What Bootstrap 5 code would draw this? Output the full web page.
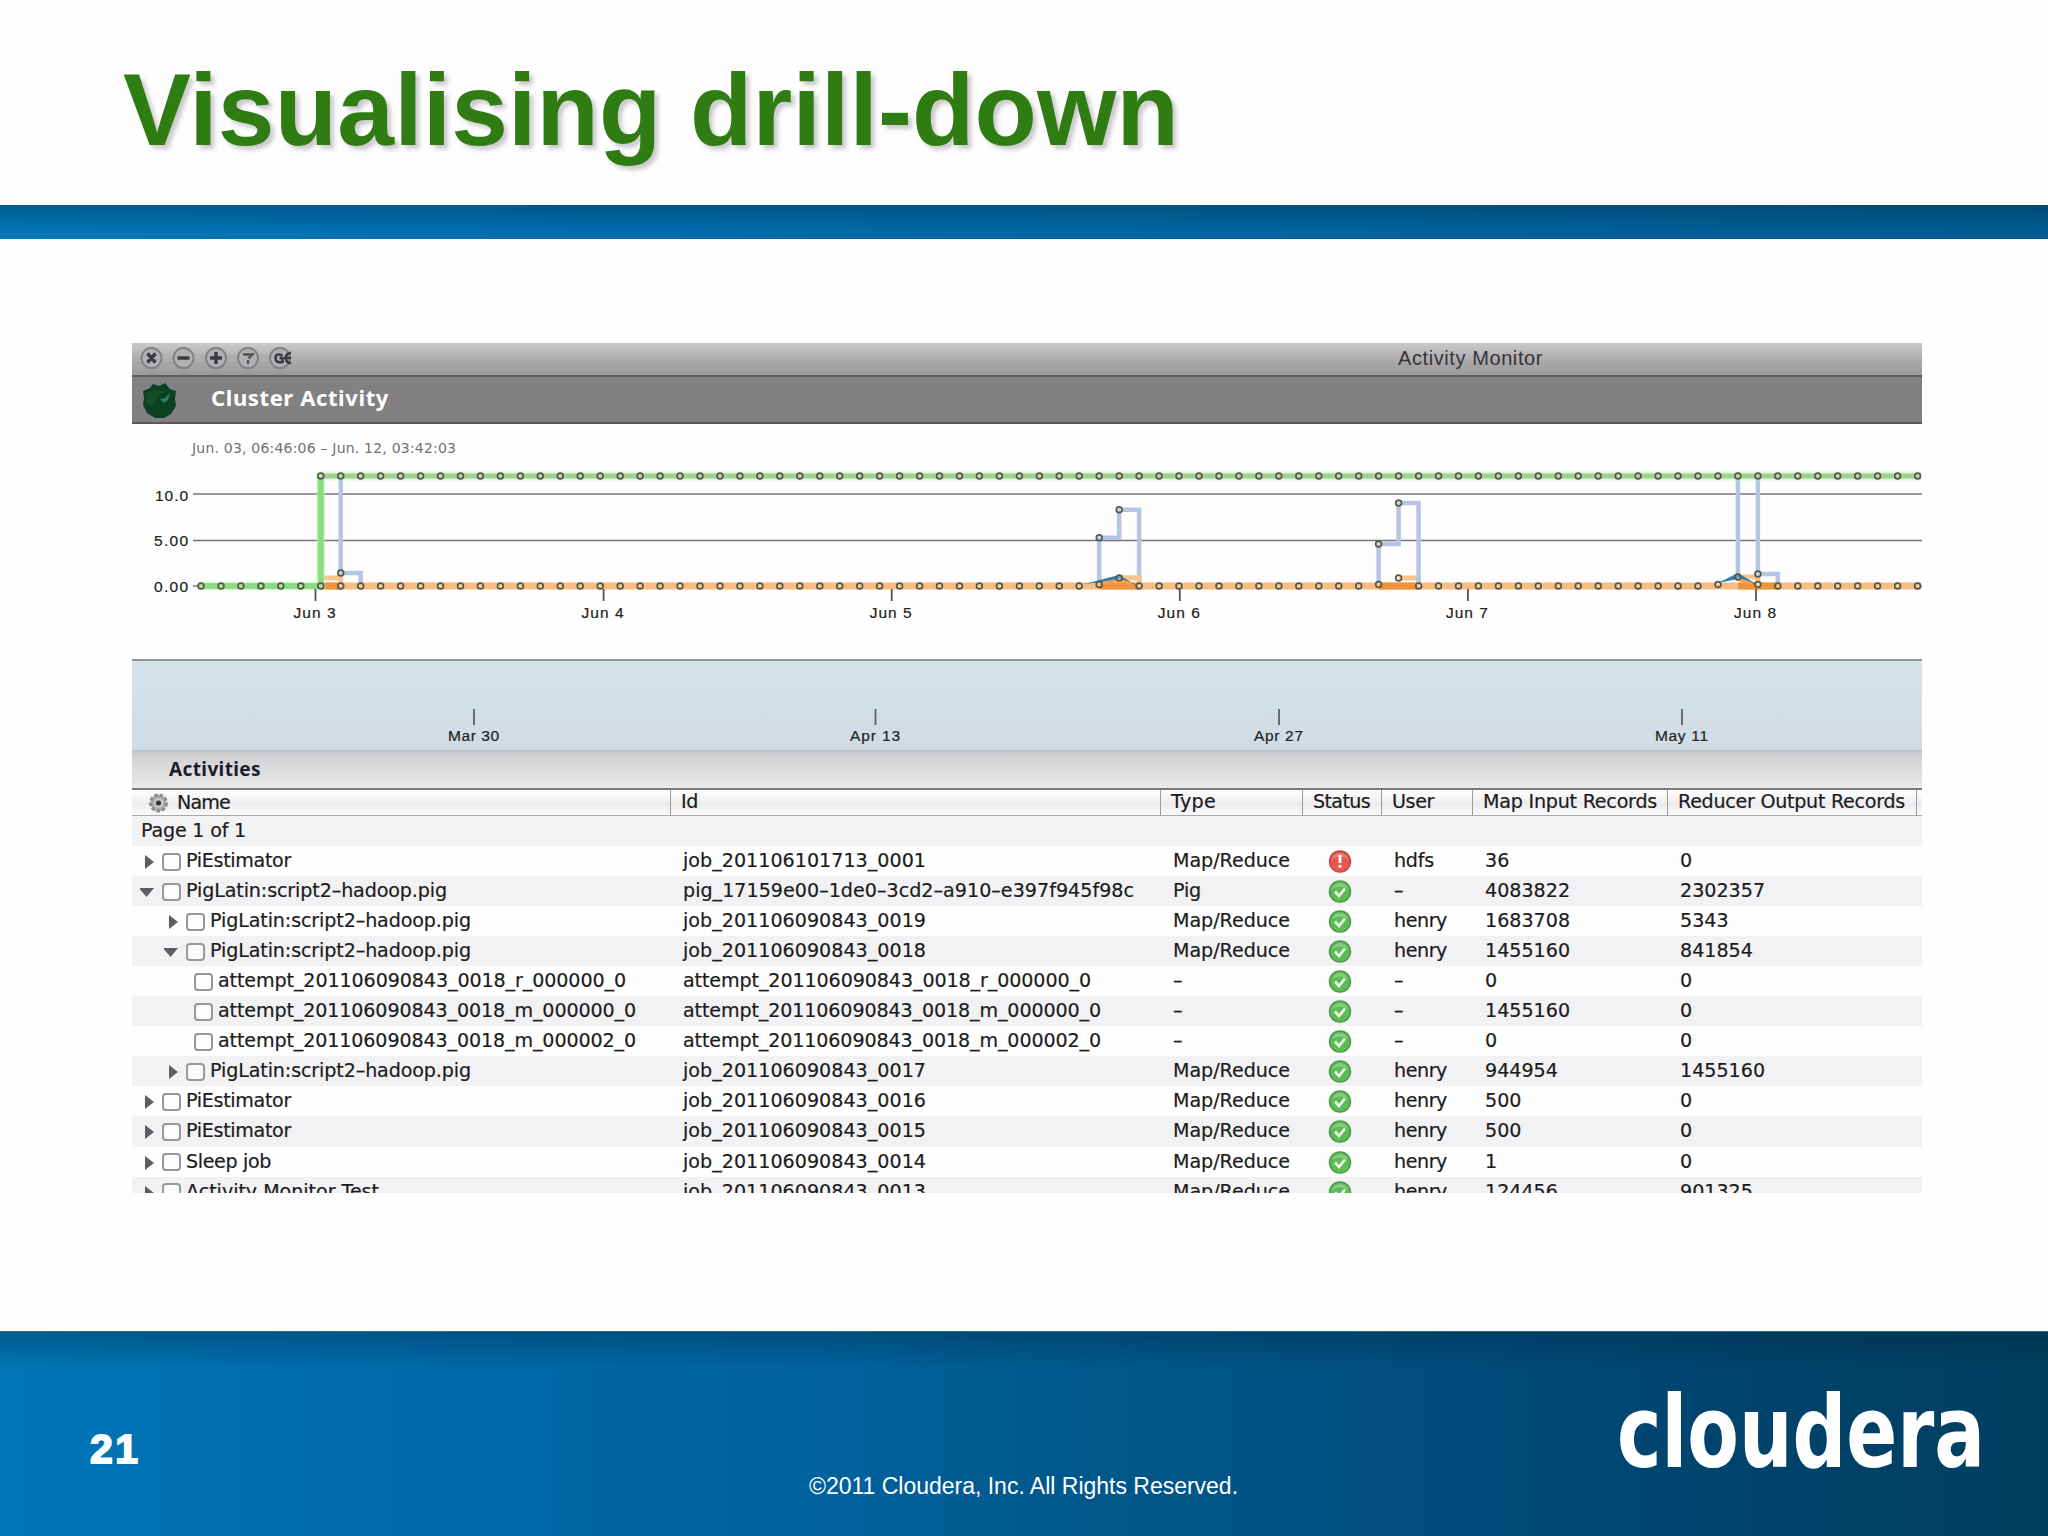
<!DOCTYPE html>
<html lang="en">
<head>
<meta charset="utf-8">
<title>Visualising drill-down</title>
<link href="https://cdn.jsdelivr.net/npm/bootstrap@5.3.0/dist/css/bootstrap.min.css" rel="stylesheet">
<style>
body{width:2048px;height:1536px;overflow:hidden;background:#fefefe;font-family:"Liberation Sans",Arial,sans-serif;color:#1c1c1c}
.slide-head{height:205px;padding:51px 0 0 123px}
.slide-title{font-size:102px;line-height:118px;font-weight:700;color:#2f7d12;text-shadow:4px 4px 4px rgba(90,80,100,.3);white-space:nowrap}
.band{height:34px;background:linear-gradient(180deg,rgba(0,40,60,.32),rgba(0,40,60,0) 26px),linear-gradient(90deg,#0076b7 0,#006fb0 20%,#0068a5 50%,#005f98 80%,#005b92 100%)}
.slide-foot{height:205px;border-top:1px solid #2a6f92;background:linear-gradient(180deg,rgba(0,35,55,.32),rgba(0,35,55,0) 36px),linear-gradient(90deg,#0076b7 0,#006cac 15%,#00629f 40%,#005a8e 50%,#004f80 67%,#00436c 85%,#003f5f 100%)}
.slide-main{height:1092px;padding:104px 126px 0 132px}
.monitor{height:850px;overflow:hidden;font-family:"DejaVu Sans",sans-serif}
.winbar{height:34px;background:linear-gradient(#cac8cb,#aaa7aa 60%,#9c999c);border-bottom:2px solid #5f5d60;padding-left:8px}
.winbar svg{width:170px;height:32px}
.wintitle{font:20px/30px "Liberation Sans",sans-serif;color:#363438;margin-left:1088px}
.toolbar{height:47px;background:#828082;border-bottom:2px solid #5b595b;padding-left:10px}
.tooltitle{font:700 22px/40px "Noto Sans",sans-serif;color:#fff;margin-left:34px;margin-top:-5px}
.chart{display:block;width:1790px;height:235px}
.strip{display:block;width:1790px;height:91px;background:linear-gradient(#d4e3ea,#d1dbe4);border-top:2px solid #8d9599}
.actbar{height:40px;background:linear-gradient(#b9c1c5 0,#cfced1 12%,#dcdbdd 50%,#ebebec);border-bottom:2px solid #7c7c7e;padding-left:37px;font:700 19px/38px "Noto Sans",sans-serif;color:#1d1d28}
.grid-head,.grid-row{display:grid;grid-template-columns:539px 490px 142px 79px 91px 195px 249px 5px;font-size:19.1px;white-space:nowrap;-webkit-text-stroke:.2px #1c1c1c}
.grid-head{height:26px;background:linear-gradient(#fff,#ededf0 55%,#fafafa);border-bottom:1.5px solid #a9a9ab;line-height:24px}
.grid-head>div{border-right:1.5px solid #9c9c9f;padding-left:10px}
.grid-head>div:first-child{padding-left:16px}
.grid-head>div:last-child{border:0}
.grid-row{height:30.05px;line-height:30px}
.grid-row>div{padding-left:12px}
.grid-row>div:nth-child(2){padding-left:12px}
.grid-row>div:first-child{padding-left:8px}
.grid-row:nth-child(odd){background:#f2f1f3}
.lv1{margin-left:24px}.lv2{margin-left:32px}
.tri{width:16px;height:30px;flex:none}
.tick{width:19px;height:18px;border:2px solid #98979b;border-radius:4px;background:#fcfcfd;margin:1px 5px 0 6px;flex:none}
.state{display:block;width:24px;height:28px;margin-left:13px}
.pageno{font-size:41px;line-height:46px;font-weight:700;letter-spacing:2.5px;-webkit-text-stroke:1.8px #fff;margin:94px 0 0 90px;width:60px}
.copy{font-size:23px;line-height:26px;margin:141px 0 0 659px;white-space:nowrap;width:440px}
.logo{width:400px;height:110px;margin:41px 0 0 351px}
</style>
<script src="https://cdn.jsdelivr.net/npm/bootstrap@5.3.0/dist/js/bootstrap.bundle.min.js"></script>
</head>
<body>
<header class="slide-head"><h1 class="slide-title m-0 d-inline-block"><span data-w="1056">Visualising drill-down</span></h1></header>
<div class="band"></div>
<main class="slide-main">
<section class="monitor">
  <div class="winbar d-flex align-items-start">
    <svg viewBox="0 0 170 32" fill="none" stroke="#3c3a3e" stroke-width="3.4">
      <g fill="#b3b0b3" stroke="#817f84" stroke-width="1.8"><circle cx="11.500" cy="15" r="10"/><circle cx="43.500" cy="15" r="10"/><circle cx="76" cy="15" r="10"/><circle cx="108" cy="15" r="10"/><circle cx="140" cy="15" r="10"/></g>
      <path d="M7.500 10.500l8 9M15.500 10.500l-8 9M37.500 15h12M70 15h12M76 9v12"/>
      <path d="M103 11.500h9.500l-4 4M108 17v4" stroke-width="2.300" stroke="#504e52"/>
      <path d="M142.500 12.500q-7-3-7 2.500t7 4v-4h-3M151 10q-5 0-5 5t5 5M144 15h7" stroke-width="2.600"/>
    </svg>
    <div class="wintitle"><span data-w="145">Activity Monitor</span></div>
  </div>
  <div class="toolbar d-flex align-items-center">
    <svg width="35" height="36" viewBox="0 0 35 36"><path d="M1 9L8 6l3-4 6 2 6-3 5 6 6 2-1 8 1 7-5 8-7 4h-9l-8-5-4-8 1-7z" fill="#0b4022"/><path d="M3 12l9-4 12 1-8 5-5 10-7-2z" fill="#124c29"/><path d="M18 17l5-1 5-5-2 7-4 3z" fill="#2b8558"/></svg>
    <div class="tooltitle"><span data-w="178">Cluster Activity</span></div>
  </div>
  <svg class="chart" id="chart" viewBox="132 424 1790 235"></svg>
  <svg class="strip" id="strip" viewBox="132 660 1790 89"></svg>
  <div class="actbar"><span data-w="92">Activities</span></div>
  <div class="grid-head">
    <div class="d-flex align-items-center"><svg width="21" height="20" viewBox="0 0 21 20"><circle cx="10.500" cy="10" r="8" fill="#aaa8aa" stroke="#8c8a8c" stroke-width="3" stroke-dasharray="3.500 2"/><circle cx="10.500" cy="10" r="5" fill="#c5c3c5"/><circle cx="10.500" cy="10" r="2.500" fill="#333"/></svg><span class="ms-2" data-w="53">Name</span></div>
    <div><span data-w="17">Id</span></div><div><span data-w="45">Type</span></div><div><span data-w="57">Status</span></div><div><span data-w="42">User</span></div><div><span data-w="174">Map Input Records</span></div><div><span data-w="227">Reducer Output Records</span></div><div></div>
  </div>
  <div id="rows"><div class="grid-row"><div style="padding-left:9px"><span data-w="105">Page 1 of 1</span></div></div></div>
</section>
</main>
<footer class="slide-foot d-flex align-items-start text-white">
  <div class="pageno">21</div>
  <div class="copy"><span data-w="429">©2011 Cloudera, Inc. All Rights Reserved.</span></div>
  <svg class="logo" viewBox="1600 1373 400 110"><text x="1617" y="1467" font-family="DejaVu Sans Condensed, DejaVu Sans, sans-serif" font-size="99" font-stretch="condensed" font-weight="700" fill="#fff" textLength="368" lengthAdjust="spacingAndGlyphs">cloudera</text></svg>
</footer>
<script>
// Chart: evenly spaced samples along x
const X = i => 201 + 19.96 * i, r = n => n.toFixed(1);
const path = (d, c, w, extra = '') => `<path d="${d}" fill="none" stroke="${c}" stroke-width="${w}" ${extra}/>`;
const dot = (x, y) => `<circle cx="${r(x)}" cy="${y}" r="2.9" fill="#fff" fill-opacity=".25" stroke="#5a5846" stroke-width="1.7"/>`;
let s = path('M193 494H1922M193 540.500H1922M193 586H1922', '#77757a', 1.700);
s += path(`M${X(6)} 586H1921`, '#f8bd83', 7);
s += path(`M${X(6)} 586H${X(7)}M${X(45)} 586H${X(47)}M${X(59)} 586H${X(61)}M${X(77)} 586H${X(79)}`, '#ef923c', 7);
s += path(`M${X(6)} 578H${X(7)}V586M${X(46)} 578H${X(47)}V586M${X(60)} 578H${X(61)}V586M${X(77)} 577H${X(78)}V586`, '#f9c48d', 5);
for (const [a, b, c, y] of [[7, 7, 8, 573], [78, 78, 79, 574]]) s += path(`M${X(a)} 476V${y}H${X(c)}V584`, '#b2c8e2', 4.500);
s += path(`M${X(77)} 476V577`, '#b2c8e2', 4.500);
s += path(`M${X(45)} 584V537.700H${X(46)}V509.700H${X(47)}V584M${X(59)} 584V544H${X(60)}V503H${X(61)}V584`, '#b6c5e4', 4.500);
s += path(`M${X(46)} 578H${X(47)}V586`, '#f9c48d', 5);
s += `<path d="M1084 584L${X(46)} 575L1136 585L${X(46)} 580zM${X(76)} 583L${X(77)} 573L${X(78)} 585L${X(77)} 579z" fill="#287eae"/>`;
s += path(`M1104 583L${X(46)} 580L1132 584M${X(77)} 579l14 5`, '#f3a04c', 3);
s += path(`M199 586H${X(6)}V476H1921`, '#caf5bb', 9, 'opacity=".6"') + path(`M199 586H${X(6)}V476`, '#8edb86', 6) + path(`M${X(6)} 476H1921`, '#a3cf97', 5);
for (let i = 0; i <= 86; i++) { if (![46, 60, 77].includes(i)) s += dot(X(i), [45, 59, 76, 78].includes(i) ? 584.5 : 586); if (i > 5) s += dot(X(i), 476); }
for (const [i, y] of [[7, 573], [45, 537.7], [46, 509.7], [46, 578], [59, 544], [60, 503], [60, 578], [77, 577], [78, 574]]) s += dot(X(i), y);
const txt = (x, y, t, w, a = 'middle') => `<text x="${x}" y="${y}" font-family="Liberation Sans, sans-serif" font-size="15.500" fill="#222" text-anchor="${a}" stroke="#222" stroke-width=".2" textLength="${w}">${t}</text>`;
s += `<text x="192" y="453" font-family="DejaVu Sans" font-size="14" fill="#727075" textLength="264">Jun. 03, 06:46:06 – Jun. 12, 03:42:03</text>`;
s += txt(155, 501, '10.0', 33, 'start') + txt(154, 546, '5.00', 34, 'start') + txt(154, 592, '0.00', 34, 'start');
for (let d = 0; d < 6; d++) { const x = 315.5 + 288.1 * d; s += path(`M${r(x)} 589v12`, '#555', 1.800) + txt(r(x - 1), 618, 'Jun ' + (d + 3), 42); }
document.getElementById('chart').innerHTML = s;
document.getElementById('strip').innerHTML = [[474, 'Mar 30', 51], [875.5, 'Apr 13', 50], [1279, 'Apr 27', 49], [1682, 'May 11', 53]].map(([x, t, w]) => path(`M${x} 708v16`, '#5c6166', 1.800) + txt(x - .5, 740, t, w)).join('');

// Activity tree: [level, arrow, name, name width, id, id width, type, ok, user, map in, reduce out]
const P = 'PigLatin:script2-hadoop.pig', J = 'job_201106090843_', A = 'attempt_201106090843_0018_', M = 'Map/Reduce';
const data = [
 [0,'r','PiEstimator',105,'job_201106101713_0001',243,M,0,'hdfs','36','0'],
 [0,'d',P,261,'pig_17159e00-1de0-3cd2-a910-e397f945f98c',451,'Pig',1,'-','4083822','2302357'],
 [1,'r',P,261,J+'0019',243,M,1,'henry','1683708','5343'],
 [1,'d',P,261,J+'0018',243,M,1,'henry','1455160','841854'],
 [2,'',A+'r_000000_0',408,A+'r_000000_0',408,'-',1,'-','0','0'],
 [2,'',A+'m_000000_0',418,A+'m_000000_0',418,'-',1,'-','1455160','0'],
 [2,'',A+'m_000002_0',418,A+'m_000002_0',418,'-',1,'-','0','0'],
 [1,'r',P,261,J+'0017',243,M,1,'henry','944954','1455160'],
 [0,'r','PiEstimator',105,J+'0016',243,M,1,'henry','500','0'],
 [0,'r','PiEstimator',105,J+'0015',243,M,1,'henry','500','0'],
 [0,'r','Sleep job',85,J+'0014',243,M,1,'henry','1','0'],
 [0,'r','Activity Monitor Test',193,J+'0013',243,M,1,'henry','124456','901325']];
const W = {[M]:117, Pig:28, henry:53, hdfs:40};
const cell = (t, w) => `<span ${w ? `data-w="${w}"` : ''}>${t === '-' ? '–' : t.replace(/(\w)-/g, '$1–')}</span>`;
const tri = a => a ? `<svg class="tri" viewBox="0 0 16 28"><path d="${a === 'r' ? 'M5 8v14l9-7z' : 'M-1 11h15l-7.500 9z'}" fill="#5f5d61"/></svg>` : '';
const state = ok => `<svg class="state" viewBox="0 0 24 28"><circle cx="12" cy="15.500" r="10.500" fill="${ok ? '#5fbb58' : '#e4594d'}" stroke="${ok ? '#4c9a4a' : '#c24b43'}" stroke-width="1.500"/><path d="M4 13a8.500 8.500 0 0 1 16 0q-8-5-16 0z" fill="#fff" opacity=".25"/>${ok ? '<path d="M7 15.500l4 4.500 6-7.500" fill="none" stroke="#e9fae4" stroke-width="2.700"/>' : '<path d="M12 9v8M12 19v2.800" stroke="#fff" stroke-width="2.800"/>'}</svg>`;
document.getElementById('rows').innerHTML += data.map(d => `<div class="grid-row"><div><div class="d-flex align-items-center lv${d[0]}">${tri(d[1])}${d[0] === 2 ? '<i class="ms-3"></i>' : ''}<i class="tick"></i>${cell(d[2], d[3])}</div></div><div>${cell(d[4], d[5])}</div><div>${cell(d[6], W[d[6]])}</div><div>${state(d[7])}</div><div>${cell(d[8], W[d[8]])}</div><div>${cell(d[9])}</div><div>${cell(d[10])}</div><div></div></div>`).join('');

document.querySelectorAll('[data-w]').forEach(e => {
  const w = e.getBoundingClientRect().width;
  e.style.letterSpacing = ((+e.dataset.w - w) / e.textContent.length).toFixed(3) + 'px';
});
</script>
</body>
</html>
